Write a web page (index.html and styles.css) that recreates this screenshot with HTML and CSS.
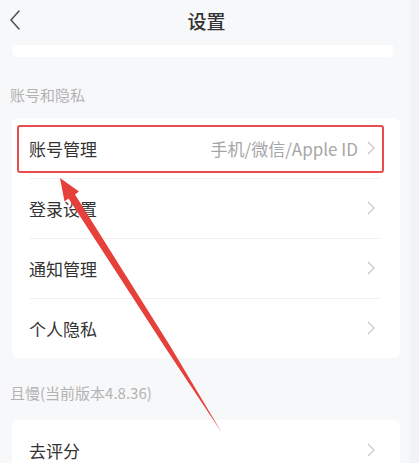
FILE: index.html
```html
<!DOCTYPE html>
<html>
<head>
  <meta charset="UTF-8">
  <title>设置</title>
  <link rel="stylesheet" href="styles.css">
</head>
<body>
  <div class="page">
    <!-- Nav bar -->
    <div class="nav">
      <span class="nav-back">
        <svg width="12" height="20" viewBox="0 0 12 20"><path d="M10 1 L2 10 L10 19" fill="none" stroke="#555" stroke-width="1.6" stroke-linecap="round" stroke-linejoin="round"/></svg>
      </span>
      <span class="nav-title">设置</span>
      <span></span>
    </div>
    <div class="card-tail"></div>

    <!-- Account section -->
    <div class="section-label">账号和隐私</div>
    <div class="card">
      <div class="row highlighted">
        <span class="row-title">账号管理</span>
        <span class="row-value">手机/微信/Apple ID</span>
        <span class="chevron"><svg width="8" height="14" viewBox="0 0 8 14"><path d="M1 1 L7 7 L1 13" fill="none" stroke="#c8c8c8" stroke-width="1.2"/></svg></span>
        <span class="mark-box"></span>
      </div>
      <div class="row">
        <span class="row-title">登录设置</span>
        <span class="chevron"><svg width="8" height="14" viewBox="0 0 8 14"><path d="M1 1 L7 7 L1 13" fill="none" stroke="#c8c8c8" stroke-width="1.2"/></svg></span>
      </div>
      <div class="row">
        <span class="row-title">通知管理</span>
        <span class="chevron"><svg width="8" height="14" viewBox="0 0 8 14"><path d="M1 1 L7 7 L1 13" fill="none" stroke="#c8c8c8" stroke-width="1.2"/></svg></span>
      </div>
      <div class="row">
        <span class="row-title">个人隐私</span>
        <span class="chevron"><svg width="8" height="14" viewBox="0 0 8 14"><path d="M1 1 L7 7 L1 13" fill="none" stroke="#c8c8c8" stroke-width="1.2"/></svg></span>
      </div>
    </div>

    <!-- About section -->
    <div class="section-label about">且慢(当前版本4.8.36)</div>
    <div class="card">
      <div class="row">
        <span class="row-title">去评分</span>
        <span class="chevron"><svg width="8" height="14" viewBox="0 0 8 14"><path d="M1 1 L7 7 L1 13" fill="none" stroke="#c8c8c8" stroke-width="1.2"/></svg></span>
      </div>
    </div>

    <!-- Annotation arrow -->
    <svg class="arrow" width="419" height="463" viewBox="0 0 419 463">
      <polygon fill="#e6403b" points="60,178 79,191.5 75,194.5 169.7,345.3 222,433 165.5,347.9 68.5,198.5 64.5,201.5"/>
    </svg>
  </div>
</body>
</html>
```

FILE: styles.css
```css
/* Global */
body {
  margin: 0;
  background: #f7f8fa;
  font-family: "Noto Sans CJK SC", "Noto Sans", sans-serif;
  width: 419px;
  height: 463px;
  overflow: hidden;
}
.page {
  position: relative;
  height: 100%;
  border-right: 9px solid #f2f3f6;
  box-sizing: border-box;
}
/* Nav bar */
.nav {
  display: grid;
  grid-template-columns: 40px 1fr 40px;
  align-items: center;
  height: 40px;
}
.nav-back {
  display: flex;
  padding-left: 9px;
}
.nav-title {
  text-align: center;
  font-size: 19px;
  font-weight: 500;
  color: #333;
  padding-left: 3px;
}
/* Cards */
.card {
  background: #fff;
  margin: 0 10px 0 12px;
  border-radius: 6px;
}
.card-tail {
  height: 12px;
  margin: 5px 17px 0 12px;
  background: #fff;
  border-radius: 0 0 6px 6px;
}
.section-label {
  font-size: 15px;
  line-height: 20px;
  color: #b3b3b3;
  padding-left: 10px;
  margin: 28px 0 13px;
}
.section-label.about {
  margin: 25px 0 17px;
}
/* Rows */
.row {
  position: relative;
  display: flex;
  align-items: center;
  height: 60px;
  padding: 0 25px 0 17px;
}
.row + .row::before {
  content: "";
  position: absolute;
  top: 0;
  left: 18px;
  right: 20px;
  border-top: 1px solid #f0f0f0;
}
.row-title {
  flex: 1;
  font-size: 17px;
  color: #333;
}
.row-value {
  font-size: 17px;
  color: #a6a6a6;
  margin-right: 9px;
}
.chevron {
  display: flex;
}
/* Red highlight box */
.mark-box {
  position: absolute;
  top: 7px;
  left: 5px;
  right: 16px;
  bottom: 5px;
  border: 2px solid #e84c4c;
  border-radius: 3px;
}
.arrow {
  position: absolute;
  top: 0;
  left: 0;
  pointer-events: none;
}
```
